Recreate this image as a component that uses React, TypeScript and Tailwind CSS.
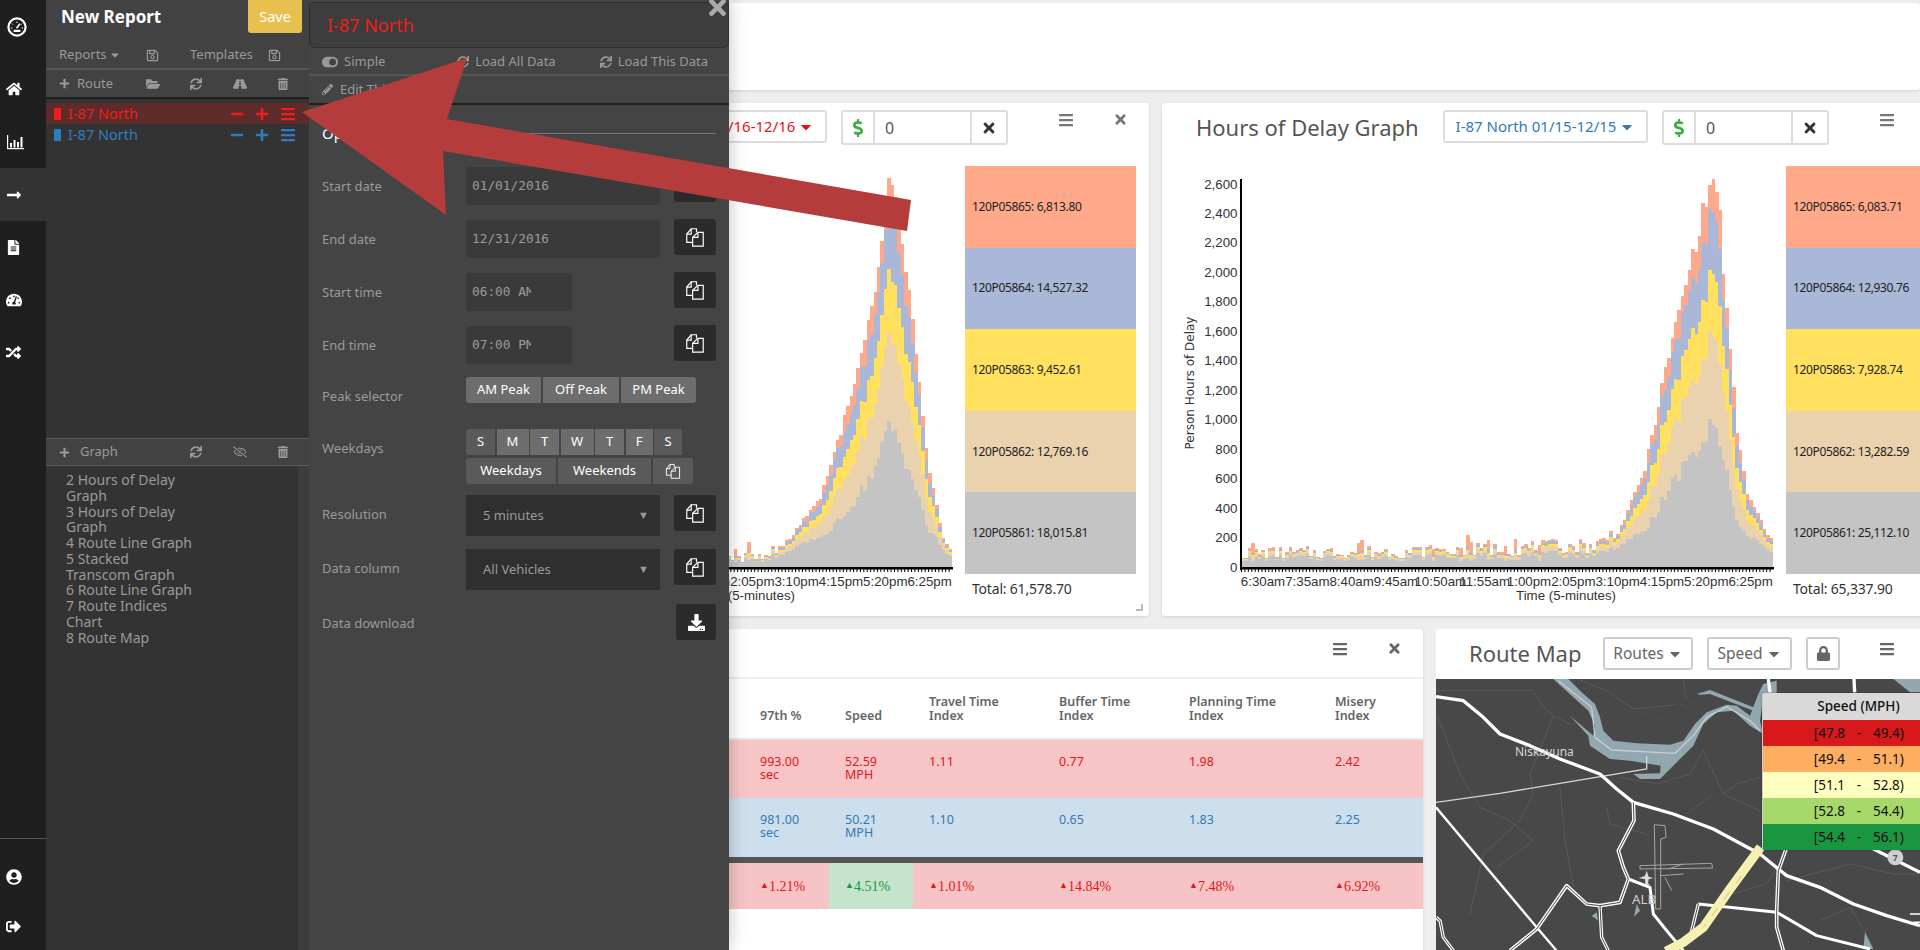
import React from "react";
import {
  FaBars,
  FaCaretDown,
  FaDollarSign,
  FaDownload,
  FaFileAlt,
  FaFolderOpen,
  FaHome,
  FaLock,
  FaLongArrowAltRight,
  FaMinus,
  FaPencilAlt,
  FaPlus,
  FaRandom,
  FaRegEyeSlash,
  FaRegSave,
  FaRoad,
  FaSignOutAlt,
  FaSync,
  FaTachometerAlt,
  FaTimes,
  FaToggleOn,
  FaTrashAlt,
  FaUserCircle,
} from "react-icons/fa";

const rnd = (i: number, k: number) => {
  const v = Math.sin(i * 12.9898 + k * 78.233) * 43758.5453;
  return v - Math.floor(v);
};

const lerp = (pts: number[][], i: number) => {
  for (let p = 1; p < pts.length; p++) {
    if (i <= pts[p][0]) {
      const [x0, y0] = pts[p - 1];
      const [x1, y1] = pts[p];
      return y0 + ((y1 - y0) * (i - x0)) / (x1 - x0);
    }
  }
  return pts[pts.length - 1][1];
};

const COLORS = ["#c4c4c4", "#ebd2ae", "#ffe15f", "#a9b8d8", "#ffa98a"];

const profile1 = [
  [0, 8], [92, 8], [105, 17], [117, 70], [127, 181], [133, 270], [137, 388], [139, 360],
  [142.7, 284], [148.6, 98], [152, 45], [155, 15],
];
const profile2 = [
  [0, 14], [60, 16], [104, 22], [111, 40], [118, 98], [125, 212], [132, 312], [137.5, 388],
  [139.5, 374], [142, 253], [145, 136], [148, 74], [152, 46], [155, 25],
];

const StackedChart = ({ profile, seed }: { profile: number[][]; seed: number }) => {
  const base = 401;
  const axis = 79;
  const barW = 3.41;
  const bars = Array.from({ length: 156 }, (_, i) => {
    const smooth = lerp(profile, i);
    const amp = Math.max(0.04, 0.8 - smooth / 60);
    const spike = smooth < 30 && rnd(i, seed + 5) > 0.9 ? 9 : 0;
    const total = smooth * (1 + amp * (rnd(i, seed) - 0.5) * 1.6) + spike;
    const t = Math.min(1, Math.sqrt(total / 100));
    const fr = [
      (spike ? 0.5 : 0.8) - 0.44 * t + 0.06 * (rnd(i, seed + 1) - 0.5),
      0.08 + 0.15 * t,
      0.03 + 0.13 * t,
      0.03 + 0.13 * t,
    ];
    const tops: number[] = [];
    let acc = 0;
    fr.forEach((f) => {
      acc += f;
      tops.push(acc);
    });
    tops.push(1);
    return { total, tops };
  });
  const labels = ["6:30am", "7:35am", "8:40am", "9:45am", "10:50am", "11:55am", "1:00pm", "2:05pm", "3:10pm", "4:15pm", "5:20pm", "6:25pm"];
  const yTicks = Array.from({ length: 14 }, (_, i) => i * 200);
  return (
    <svg width={624} height={450} className="shrink-0 font-['Liberation_Sans',sans-serif]">
      {bars.map((b, i) =>
        [4, 3, 2, 1, 0].map((k) => {
          const h = Math.round(b.total * b.tops[k]);
          return (
            <rect
              key={`${i}-${k}`}
              x={axis + i * barW}
              y={base - h}
              width={barW + 0.2}
              height={h}
              fill={COLORS[k]}
              shapeRendering="crispEdges"
            />
          );
        })
      )}
      <rect x={axis - 1} y={13} width={2} height={391} fill="#000" />
      <rect x={axis - 1} y={401} width={534} height={2.5} fill="#000" />
      {bars.map((_, i) => (
        <rect key={i} x={axis + i * barW} y={403} width={1} height={3} fill="#000" />
      ))}
      {yTicks.map((v) => (
        <text key={v} x={75.5} y={401 - (v * 383) / 2600 + 4.5} textAnchor="end" fontSize={13.3} fill="#333">
          {v.toLocaleString("en-US")}
        </text>
      ))}
      {labels.map((l, i) => (
        <text key={l} x={axis + 22 + i * 44.33} y={420} textAnchor="middle" fontSize={13.3} fill="#333">
          {l}
        </text>
      ))}
      <text x={404} y={434} textAnchor="middle" fontSize={13.3} fill="#333">
        Time (5-minutes)
      </text>
      <text
        transform="translate(32 217) rotate(-90)"
        textAnchor="middle"
        fontSize={12}
        fill="#333"
        className="font-['DejaVu_Sans',sans-serif]"
      >
        Person Hours of Delay
      </text>
    </svg>
  );
};

const CardHeader = ({ label, color, title }: { label: string; color: string; title: string }) => (
  <div className="flex h-[63px] items-start pt-[7px]">
    <div className="w-[281px] shrink-0 pl-[34px] pt-[1px] text-[22px] leading-[32px] text-[#555]">{title}</div>
    <div
      className={`flex h-[33px] w-[205px] shrink-0 items-center justify-center gap-[3px] rounded-[3px] border-2 border-[#ddd] text-[15px] ${color}`}
    >
      {label}
      <FaCaretDown size={16} />
    </div>
    <div className="ml-[14px] flex h-[35px] w-[167px] shrink-0 items-stretch rounded-[3px] border-2 border-[#ddd]">
      <div className="flex w-[32px] items-center justify-center border-r-2 border-[#ddd] text-[#3fae49]">
        <FaDollarSign size={18} />
      </div>
      <div className="flex flex-1 items-center pl-[10px] text-[16px] text-[#555]">0</div>
      <div className="flex w-[36px] items-center justify-center border-l-2 border-[#ddd] text-[#333]">
        <FaTimes size={16} />
      </div>
    </div>
    <div className="ml-[50px] flex w-[16px] shrink-0 justify-center pt-[2px] text-[#777]">
      <FaBars size={16} />
    </div>
    <div className="ml-[38px] flex w-[16px] shrink-0 justify-center pt-[2px] text-[#777]">
      <FaTimes size={15} />
    </div>
  </div>
);

const ChartCard = ({
  title,
  label,
  color,
  profile,
  seed,
  legend,
  total,
}: {
  title: string;
  label: string;
  color: string;
  profile: number[][];
  seed: number;
  legend: string[];
  total: string;
}) => (
  <div className="relative h-[513px] w-[808px] shrink-0 rounded-[3px] bg-white shadow-[0_1px_3px_rgba(0,0,0,0.12)]">
    <CardHeader title={title} label={label} color={color} />
    <div className="flex">
      <StackedChart profile={profile} seed={seed} />
      <div className="w-[171px] shrink-0">
        {legend.map((l, i) => (
          <div
            key={l}
            className="flex h-[81.6px] items-center pl-[7px] text-[12px] tracking-[-0.35px] text-[#222]"
            style={{ backgroundColor: COLORS[4 - i] }}
          >
            {l}
          </div>
        ))}
        <div className="pl-[7px] pt-[4px] text-[14px] tracking-[-0.2px] text-[#333]">{total}</div>
      </div>
    </div>
    <div className="absolute bottom-[5px] right-[6px] h-[7px] w-[7px] border-b-2 border-r-2 border-[#bbb]" />
  </div>
);

const tableCols = "grid grid-cols-[403px_85px_84px_130px_130px_146px_104px]";
const headers = [["97th %"], ["Speed"], ["Travel Time", "Index"], ["Buffer Time", "Index"], ["Planning Time", "Index"], ["Misery", "Index"]];
const rowA = [["993.00", "sec"], ["52.59", "MPH"], ["1.11"], ["0.77"], ["1.98"], ["2.42"]];
const rowB = [["981.00", "sec"], ["50.21", "MPH"], ["1.10"], ["0.65"], ["1.83"], ["2.25"]];
const rowC = ["1.21%", "4.51%", "1.01%", "14.84%", "7.48%", "6.92%"];

const TableCard = () => (
  <div className="h-[340px] w-[1082px] shrink-0 rounded-[3px] bg-white shadow-[0_1px_3px_rgba(0,0,0,0.12)]">
    <div className="flex h-[50px] items-start justify-end border-b-2 border-[#eee] pr-[21px] pt-[12px] text-[#666]">
      <FaBars size={16} />
      <div className="ml-[38px] flex w-[16px] justify-center">
        <FaTimes size={15} />
      </div>
    </div>
    <div className={`${tableCols} h-[61px] border-b-2 border-[#e8e8e8] text-[12.5px] font-semibold leading-[13.4px] text-[#666]`}>
      <div />
      {headers.map((h) => (
        <div key={h[0]} className="flex flex-col justify-end pb-[16px] pl-[16px]">
          {h.map((t) => (
            <span key={t}>{t}</span>
          ))}
        </div>
      ))}
    </div>
    <div className={`${tableCols} h-[58px] bg-[#f7c5c5] pt-[15px] text-[12.5px] leading-[13.4px] text-[#e8141c]`}>
      <div />
      {rowA.map((c) => (
        <div key={c[0]} className="flex flex-col pl-[16px]">
          {c.map((t) => (
            <span key={t}>{t}</span>
          ))}
        </div>
      ))}
    </div>
    <div className={`${tableCols} h-[59px] bg-[#cddeec] pt-[15px] text-[12.5px] leading-[13.4px] text-[#337ab7]`}>
      <div />
      {rowB.map((c) => (
        <div key={c[0]} className="flex flex-col pl-[16px]">
          {c.map((t) => (
            <span key={t}>{t}</span>
          ))}
        </div>
      ))}
    </div>
    <div className="h-[6px] bg-[#555]" />
    <div className={`${tableCols} h-[46px] bg-[#f6c4c4] font-['Liberation_Serif',serif] text-[14px]`}>
      <div />
      {rowC.map((t, i) => (
        <div
          key={t}
          className={`flex items-center pl-[16px] ${i === 1 ? "bg-[#c5e4cd] text-[#1a9641]" : "text-[#e8141c]"}`}
        >
          <span className="text-[9px]">▲</span>
          {t}
        </div>
      ))}
    </div>
  </div>
);

const speedRows = [
  ["[47.8", "49.4)", "bg-[#d7191c]"],
  ["[49.4", "51.1)", "bg-[#fdae61]"],
  ["[51.1", "52.8)", "bg-[#ffffbf]"],
  ["[52.8", "54.4)", "bg-[#a6d96a]"],
  ["[54.4", "56.1)", "bg-[#1a9641]"],
];

const MapDrawing = () => (
  <svg viewBox="48 175 1452 816" width={484} height={272} className="block">
    <rect x={48} y={175} width={1452} height={816} fill="#484848" />
    <g transform="translate(240 180)">
      <g fill="none" stroke="#5a5a5a" strokeWidth={3}>
        <path d="M-190 30 L100 30 L130 80 L160 105 L90 280 L100 340 L60 420 L-50 520 L-90 700" />
        <path d="M160 105 L210 130 M180 320 L195 480 L220 620" />
        <path d="M30 420 L100 480 L-10 560 M-190 100 L-120 280 L-60 380 L30 420" />
        <path d="M230 -5 L320 30 L400 85 L550 70 M550 -5 L560 60" />
        <path d="M610 210 L570 280 L470 310 L360 290 M610 210 L670 340 L780 390 M670 340 L710 310 L780 290 M640 340 L560 400" />
        <path d="M860 600 L1050 550 L1180 580 L1260 580 M660 650 L800 610 L830 560" />
        <path d="M320 380 L330 430 L440 460 M960 720 L1050 680 L1100 760" />
      </g>
      <path
        d="M160 -5 L205 -5 L245 35 L285 70 L300 110 L310 150 L340 180 L410 188 L510 192 L550 180 L585 130 L620 95 L680 72 L710 75 L750 105 L775 40 L790 10 L830 0 L830 40 L790 50 L780 120 L790 160 L750 135 L700 90 L650 95 L610 130 L580 195 L540 235 L510 265 L480 295 L420 295 L400 280 L480 278 L482 255 L390 240 L330 235 L270 195 L265 165 L210 105 L280 165 L285 135 L265 90 L220 50 Z"
        fill="#93a7b0"
      />
      <path d="M590 40 L630 28 L760 80 L760 90 L630 40 L600 42 Z" fill="#93a7b0" />
      <path d="M1180 -5 L1260 -5 L1260 35 L1230 35 Z" fill="#93a7b0" />
      <path
        d="M175 0 L275 80 L285 170 L335 208 L525 218 L580 165 L620 110 L680 78 L750 120 L780 150"
        fill="none"
        stroke="#c4d0d4"
        strokeWidth={4}
      />
      <path d="M360 142 L480 100 L590 45" fill="none" stroke="#3a464d" strokeWidth={3} />
      <path d="M-192 365 L0 338 L440 265 L440 225" fill="none" stroke="#d4d4d4" strokeWidth={4} />
    </g>
    <path d="M515 885 L530 875 L535 900 Z M642 888 L650 850 L660 870 Z M1335 935 L1360 985 L1330 985 Z" fill="#93a7b0" />
    <g fill="none" stroke="#fff" strokeLinejoin="round">
      <path d="M48 228 L130 240 L190 290 L240 340 L330 375 L420 415 L540 460 L590 505 L640 545 L760 580 L880 625 L1020 700 L1075 745 L1100 765 L1200 800 L1300 850 L1400 885 L1500 915" strokeWidth={10} />
      <path d="M48 560 L350 920 L410 990" strokeWidth={7} />
      <path d="M640 545 L642 600 L595 690 L610 740 L625 775 L600 845 L540 855 L500 850 L440 795 L350 925 L270 990" strokeWidth={11} />
      <path d="M625 775 L690 800 L700 880 L740 930 L790 990" strokeWidth={9} />
      <path d="M540 855 L545 950 L565 990" strokeWidth={10} />
      <path d="M1100 680 L1075 750 L1070 870 L1070 920 L1090 990" strokeWidth={11} />
      <path d="M835 850 L1070 875 L1190 945 L1350 985" strokeWidth={9} />
      <path d="M835 850 L810 950" strokeWidth={10} />
      <path d="M48 890 L60 900 L70 950 L100 990" strokeWidth={10} />
      <path d="M1045 175 L1050 215 M1302 175 L1304 215 M1350 680 L1500 755" strokeWidth={10} />
      <path d="M1470 880 L1500 880 M1480 905 L1500 905" strokeWidth={5} />
    </g>
    <g fill="none" stroke="#484848" strokeWidth={3}>
      <path d="M640 545 L642 600 L595 690 L610 740 L625 775 L600 845 L540 855 L500 850 L440 795 L350 925 L270 990" />
      <path d="M1100 680 L1075 750 L1070 870 L1070 920 L1090 990" />
      <path d="M540 855 L545 950 L565 990" />
      <path d="M835 850 L810 950" />
      <path d="M48 890 L60 900 L70 950 L100 990" />
    </g>
    <path d="M1022 680 L930 805 L850 920 L790 965 L738 992" fill="none" stroke="#f6f0b2" strokeWidth={28} />
    <path d="M965 765 L850 920" fill="none" stroke="#d9d49a" strokeWidth={4} strokeDasharray="30 30" />
    <g fill="none" stroke="#a5a5a5" strokeWidth={3}>
      <path d="M703 612 L735 615 L738 650 L722 655 L722 865 L707 865 L703 612 Z" />
      <path d="M660 735 L875 728 L878 742 L660 745 Z" />
      <path d="M720 765 L790 760 M735 770 L755 810 M745 745 L790 730" />
    </g>
    <path
      d="M680 750 L686 768 L700 772 L686 776 L684 788 L691 792 L669 792 L676 788 L675 776 L656 772 L675 766 Z"
      fill="#ddd"
    />
    <text x={285} y={407} fontSize={36} fill="#d6d6d6">
      Niskayuna
    </text>
    <text x={636} y={851} fontSize={40} fill="#cfcfcf">
      ALB
    </text>
    <circle cx={1426} cy={710} r={24} fill="#d0d0d0" />
    <text x={1426} y={720} fontSize={26} fontWeight={700} textAnchor="middle" fill="#555">
      7
    </text>
  </svg>
);

const MapCard = () => (
  <div className="relative h-[340px] w-[600px] shrink-0 rounded-[3px] bg-white">
    <div className="flex h-[50px] items-start pt-[8px]">
      <div className="w-[167px] pl-[33px] text-[22px] leading-[32px] text-[#555]">Route Map</div>
      <div className="flex h-[33px] w-[90px] items-center justify-center gap-[3px] rounded-[3px] border-2 border-[#ccc] text-[15.5px] text-[#666]">
        Routes
        <FaCaretDown size={16} />
      </div>
      <div className="ml-[14px] flex h-[33px] w-[85px] items-center justify-center gap-[3px] rounded-[3px] border-2 border-[#ccc] text-[15.5px] text-[#666]">
        Speed
        <FaCaretDown size={16} />
      </div>
      <div className="ml-[14px] flex h-[33px] w-[34px] items-center justify-center rounded-[3px] border-2 border-[#ccc] text-[#666]">
        <FaLock size={15} />
      </div>
      <div className="ml-[39px] pt-[4px] text-[#666]">
        <FaBars size={16} />
      </div>
    </div>
    <MapDrawing />
    <div className="absolute left-[326px] top-[64px] w-[192px] overflow-hidden rounded-[2px] border-l border-[#ccc] text-[13.5px] text-[#111] shadow-[0_0_2px_rgba(0,0,0,0.4)]">
      <div className="flex h-[27px] items-center justify-center bg-[#d9d9d9] font-medium">Speed (MPH)</div>
      {speedRows.map(([a, b, bg]) => (
        <div key={a} className={`grid h-[26px] grid-cols-[82px_28px_82px] items-center ${bg}`}>
          <span className="text-right">{a}</span>
          <span className="text-center">-</span>
          <span>{b}</span>
        </div>
      ))}
    </div>
  </div>
);

const GaugeIcon = () => (
  <svg viewBox="0 0 20 20" width={20} height={20} fill="none" stroke="currentColor">
    <circle cx={10} cy={10} r={8.6} strokeWidth={2.2} />
    <path d="M10 4.6 V6 M5 6.6 L6 7.6 M15 6.6 L14 7.6 M4 11 H5.3 M16 11 H14.7" strokeWidth={1} />
    <path d="M9.5 11.2 L13 6.8" strokeWidth={1.6} />
    <rect x={6.6} y={12.8} width={6.8} height={2.2} fill="currentColor" stroke="none" />
  </svg>
);

const BarsIcon = () => (
  <svg viewBox="0 0 18 18" width={18} height={18} fill="currentColor">
    <rect x={1} y={2} width={1.2} height={14} />
    <rect x={1} y={15} width={17} height={1.2} />
    <rect x={4} y={10} width={2} height={4.5} />
    <rect x={7.5} y={7} width={2} height={7.5} />
    <rect x={11} y={9} width={2} height={5.5} />
    <rect x={14.5} y={4} width={2} height={10.5} />
  </svg>
);

const CopyIcon = ({ size = 20 }: { size?: number }) => (
  <svg viewBox="44 30 62 68" width={size} height={size} fill="none" stroke="currentColor" strokeWidth={4}>
    <path d="M80 48 V36 H62 L47 54 V82 H67" />
    <path d="M62 36 V54 H47" />
    <path d="M85 48 H103 V95 H67 V65 Z" />
    <path d="M85 48 V65 H67" />
  </svg>
);

const rail = [
  { icon: <FaHome size={16} /> },
  { icon: <BarsIcon /> },
  { icon: <FaLongArrowAltRight size={16} />, active: true },
  { icon: <FaFileAlt size={15} /> },
  { icon: <FaTachometerAlt size={16} /> },
  { icon: <FaRandom size={15} /> },
];

const Rail = () => (
  <div className="flex w-[46px] shrink-0 flex-col bg-[#1f1f1f] text-white">
    <div className="flex h-[63px] items-start pl-[7px] pt-[17px]">
      <GaugeIcon />
    </div>
    {rail.map((r, i) => (
      <div key={i} className={`flex h-[52.7px] items-center pl-[6px] ${r.active ? "bg-[#333]" : ""}`}>
        {r.icon}
      </div>
    ))}
    <div className="mt-auto flex h-[112px] flex-col items-start gap-[34px] border-t border-[#555] pl-[6px] pt-[30px]">
      <FaUserCircle size={16} />
      <FaSignOutAlt size={15} />
    </div>
  </div>
);

const IconCell = ({ children }: { children: React.ReactNode }) => (
  <div className="flex w-[43.5px] shrink-0 justify-center">{children}</div>
);

const RouteRow = ({ color, bg }: { color: string; bg?: string }) => (
  <div className={`flex h-[21px] items-center pl-[8px] text-[14.5px] ${color} ${bg ?? ""}`}>
    <div className="h-[12px] w-[7px] bg-current" />
    <span className="ml-[7px] w-[156px]">I-87 North</span>
    <div className="flex w-[25px] justify-center">
      <FaMinus size={14} />
    </div>
    <div className="flex w-[26px] justify-center">
      <FaPlus size={14} />
    </div>
    <div className="flex w-[26px] justify-center">
      <FaBars size={16} />
    </div>
  </div>
);

const graphList = ["2 Hours of Delay Graph", "3 Hours of Delay Graph", "4 Route Line Graph", "5 Stacked Transcom Graph", "6 Route Line Graph", "7 Route Indices Chart", "8 Route Map"];

const ReportPanel = () => (
  <div className="flex w-[263px] shrink-0 flex-col bg-[#333] text-[#9a9a9a]">
    <div className="bg-[#424242]">
      <div className="flex h-[42px] items-start justify-between pl-[15px] pr-[7px]">
        <span className="pt-[4px] text-[17px] font-bold text-white">New Report</span>
        <div className="flex h-[33px] w-[54px] items-center justify-center rounded-b-[3px] bg-[#e8c04f] text-[14.5px] text-white">
          Save
        </div>
      </div>
      <div className="flex h-[28px] items-center border-b-2 border-[#575757] text-[13px]">
        <span className="flex w-[91px] items-center gap-[2px] pl-[13px]">
          Reports
          <FaCaretDown size={12} />
        </span>
        <div className="flex w-[30px] justify-center">
          <FaRegSave size={13} />
        </div>
        <span className="w-[85px] pl-[23px]">Templates</span>
        <div className="ml-[7px] flex w-[30px] justify-center">
          <FaRegSave size={13} />
        </div>
      </div>
      <div className="flex h-[29px] items-center border-b-2 border-[#1f1f1f] text-[13px]">
        <div className="flex w-[85px] items-center gap-[7px] pl-[13px]">
          <FaPlus size={11} />
          Route
        </div>
        <IconCell>
          <FaFolderOpen size={14} />
        </IconCell>
        <IconCell>
          <FaSync size={12} />
        </IconCell>
        <IconCell>
          <FaRoad size={14} />
        </IconCell>
        <IconCell>
          <FaTrashAlt size={12} />
        </IconCell>
      </div>
    </div>
    <div className="h-[339px] pt-[4px]">
      <RouteRow color="text-[#ee1c1c]" bg="bg-[#5e2b2b]" />
      <RouteRow color="text-[#2e7ebf]" />
    </div>
    <div className="flex h-[28px] items-center border-y border-[#5c5c5c] bg-[#424242] text-[13px]">
      <div className="flex w-[85px] items-center gap-[10px] pl-[13px]">
        <FaPlus size={11} />
        Graph
      </div>
      <IconCell>
        <span />
      </IconCell>
      <IconCell>
        <FaSync size={12} />
      </IconCell>
      <IconCell>
        <FaRegEyeSlash size={14} />
      </IconCell>
      <IconCell>
        <FaTrashAlt size={12} />
      </IconCell>
    </div>
    <div className="flex flex-1">
      <div className="w-[252px] bg-[#333] pl-[20px] pt-[6px] text-[14px] leading-[15.75px]">
        {graphList.map((g) => (
          <div key={g} className="w-[128px]">
            {g}
          </div>
        ))}
      </div>
      <div className="flex-1 bg-[#3c3c3c]" />
    </div>
  </div>
);

const CopyBtn = () => (
  <div className="flex h-[36px] w-[42px] items-center justify-center rounded-[3px] bg-[#2b2b2b] text-white">
    <CopyIcon />
  </div>
);

const FieldRow = ({ label, value, narrow }: { label: string; value: string; narrow?: boolean }) => (
  <div className="flex h-[53px] items-start">
    <span className="w-[144px] shrink-0 pt-[16px] text-[13px] leading-[20px]">{label}</span>
    <div
      className={`mt-[7px] flex h-[38px] items-center rounded-[3px] bg-[#3a3a3a] pl-[6px] font-['DejaVu_Sans_Mono',monospace] text-[12.8px] text-[#9a9a9a] ${
        narrow ? "w-[106px]" : "w-[194px]"
      }`}
    >
      <span className={`overflow-hidden whitespace-pre ${narrow ? "w-[59px]" : ""}`}>{value}</span>
    </div>
    <div className="ml-auto mt-[6px]">
      <CopyBtn />
    </div>
  </div>
);

const SelectRow = ({ label, value, h }: { label: string; value: string; h: string }) => (
  <div className={`flex items-start ${h}`}>
    <span className="w-[144px] shrink-0 pt-[14px] text-[13px] leading-[20px]">{label}</span>
    <div className="mt-[5px] flex h-[41px] w-[194px] items-center justify-between bg-[#2f2f2f] pl-[17px] pr-[11px] text-[13px] text-[#9a9a9a]">
      {value}
      <span className="text-[11px]">▼</span>
    </div>
    <div className="ml-auto mt-[5px]">
      <CopyBtn />
    </div>
  </div>
);

const days = [
  ["S", "w-[29px] bg-[#5a5a5a]"],
  ["M", "w-[32px] bg-[#6d6d6d]"],
  ["T", "w-[29px] bg-[#6d6d6d]"],
  ["W", "w-[33px] bg-[#6d6d6d]"],
  ["T", "w-[29px] bg-[#6d6d6d]"],
  ["F", "w-[27px] bg-[#6d6d6d]"],
  ["S", "w-[28px] bg-[#5a5a5a]"],
];

const OptionsPanel = () => (
  <div className="relative flex w-[420px] shrink-0 flex-col bg-[#444] text-[#9a9a9a]">
    <div className="pt-[2px]">
      <div className="flex h-[46px] items-center rounded-b-[6px] rounded-t-[3px] border border-[#2e2e2e] bg-[#3d3d3d] pl-[17px] text-[18px] text-[#ee1c1c]">
        I-87 North
      </div>
    </div>
    <div className="flex h-[28px] items-center border-b-2 border-[#575757] pl-[13px] pr-[21px] pt-[2px] text-[13px]">
      <FaToggleOn size={16} />
      <span className="ml-[6px]">Simple</span>
      <FaSync size={12} className="ml-auto" />
      <span className="ml-[6px]">Load All Data</span>
      <FaSync size={12} className="ml-[44px]" />
      <span className="ml-[6px]">Load This Data</span>
    </div>
    <div className="flex h-[29px] items-center gap-[6px] border-b-2 border-[#1f1f1f] pl-[13px] text-[13px]">
      <FaPencilAlt size={11} />
      <span className="ml-[1px]">Edit This</span>
    </div>
    <div className="flex-1 px-[13px]">
      <div className="flex h-[55px] items-center pt-[1px] text-[15px] text-white">
        <span className="pr-[6px]">Options</span>
        <div className="h-px flex-1 bg-[#777]" />
      </div>
      <FieldRow label="Start date" value="01/01/2016" />
      <FieldRow label="End date" value="12/31/2016" />
      <FieldRow label="Start time" value="06:00 AM" narrow />
      <FieldRow label="End time" value="07:00 PM" narrow />
      <div className="flex h-[52px] items-start">
        <span className="w-[144px] shrink-0 pt-[14px] text-[13px] leading-[20px]">Peak selector</span>
        <div className="mt-[5px] flex h-[26px] gap-[2px] overflow-hidden rounded-[3px] text-[13px] text-white">
          <div className="flex w-[75px] items-center justify-center bg-[#6d6d6d]">AM Peak</div>
          <div className="flex w-[76px] items-center justify-center bg-[#6d6d6d]">Off Peak</div>
          <div className="flex w-[75px] items-center justify-center bg-[#6d6d6d]">PM Peak</div>
        </div>
      </div>
      <div className="flex h-[66px] items-start">
        <span className="w-[144px] shrink-0 pt-[14px] text-[13px] leading-[20px]">Weekdays</span>
        <div className="mt-[5px] flex flex-col gap-[3px] text-[13px] text-white">
          <div className="flex h-[26px] gap-[1.5px] overflow-hidden rounded-[3px]">
            {days.map(([d, c], i) => (
              <div key={i} className={`flex items-center justify-center ${c}`}>
                {d}
              </div>
            ))}
          </div>
          <div className="flex h-[26px] gap-[2px] overflow-hidden rounded-[3px]">
            <div className="flex w-[90px] items-center justify-center bg-[#5a5a5a]">Weekdays</div>
            <div className="flex w-[93px] items-center justify-center bg-[#5a5a5a]">Weekends</div>
            <div className="flex w-[40px] items-center justify-center bg-[#5a5a5a]">
              <CopyIcon size={16} />
            </div>
          </div>
        </div>
      </div>
      <SelectRow label="Resolution" value="5 minutes" h="h-[54px]" />
      <SelectRow label="Data column" value="All Vehicles" h="h-[55px]" />
      <div className="flex items-start">
        <span className="w-[144px] shrink-0 pt-[14px] text-[13px] leading-[20px]">Data download</span>
        <div className="ml-auto mt-[5px] flex h-[36px] w-[40px] items-center justify-center rounded-[3px] bg-[#2b2b2b] text-white">
          <FaDownload size={17} />
        </div>
      </div>
    </div>
    <div className="absolute right-[-1px] top-[-5px] text-[#aaa]">
      <FaTimes size={25} />
    </div>
  </div>
);

const App = () => (
  <div className="relative h-[950px] w-[1920px] overflow-hidden bg-[#eee] font-['Noto_Sans',sans-serif]">
    <div className="flex flex-col gap-[13px] pl-[341px] pt-[3px]">
      <div className="h-[87px] rounded-[3px] bg-white shadow-[0_1px_3px_rgba(0,0,0,0.12)]" />
      <div className="flex gap-[13px]">
        <ChartCard
          title="Hours of Delay Graph"
          label="I-87 North 01/16-12/16"
          color="text-[#e8141c]"
          profile={profile1}
          seed={3}
          legend={["120P05865: 6,813.80", "120P05864: 14,527.32", "120P05863: 9,452.61", "120P05862: 12,769.16", "120P05861: 18,015.81"]}
          total="Total: 61,578.70"
        />
        <ChartCard
          title="Hours of Delay Graph"
          label="I-87 North 01/15-12/15"
          color="text-[#337ab7]"
          profile={profile2}
          seed={7}
          legend={["120P05865: 6,083.71", "120P05864: 12,930.76", "120P05863: 7,928.74", "120P05862: 13,282.59", "120P05861: 25,112.10"]}
          total="Total: 65,337.90"
        />
      </div>
      <div className="flex gap-[13px]">
        <TableCard />
        <MapCard />
      </div>
    </div>
    <div className="absolute left-0 top-0 z-10 flex h-[950px] shadow-[0_0_16px_rgba(0,0,0,0.25)]">
      <Rail />
      <ReportPanel />
      <OptionsPanel />
    </div>
    <svg className="pointer-events-none absolute left-0 top-0 z-20" width={1920} height={950}>
      <polygon points="302,112 467,58 447,119 911,200 907,231 443,151 446,215" fill="#b43c3c" />
    </svg>
  </div>
);

export default App;
